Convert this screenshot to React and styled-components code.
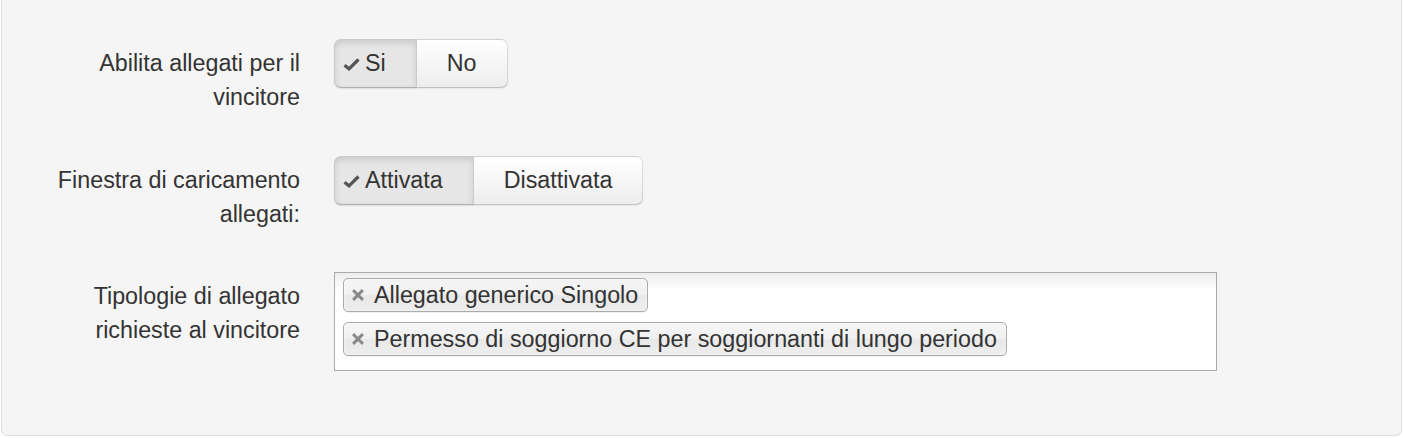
import React, { useState } from "react";
import styled, { createGlobalStyle } from "styled-components";

const GlobalStyle = createGlobalStyle`
  html, body {
    margin: 0;
    padding: 0;
    background: #ffffff;
  }
  body {
    font-family: "Liberation Sans", Arial, Helvetica, sans-serif;
    font-size: 23.3px;
    line-height: 34px;
    color: #333333;
  }
`

const Well = styled.div`
  margin: 0 1px 0 1px;
  height: 436px;
  box-sizing: border-box;
  background: #f5f5f5;
  border: 1px solid #e0e0e0;
  border-top: none;
  border-radius: 0 0 7px 7px;
  box-shadow: 0 1px 1px rgba(0, 0, 0, 0.04);
  padding: 39px 32px 0 31px;
  display: flex;
  flex-direction: column;
`

const Row = styled.div`
  display: flex;
  align-items: flex-start;
  margin-top: ${p => p.$gap || 0}px;
`

const Label = styled.label`
  width: 267px;
  flex-shrink: 0;
  text-align: right;
  padding-top: 7px;
  margin-right: 34px;
  color: #333333;
`

const Group = styled.div`
  display: inline-flex;
  border-radius: 7px;
  box-shadow: 0 1px 2px rgba(0, 0, 0, 0.06);
`

const ToggleButton = styled.button`
  font-family: inherit;
  font-size: 23.3px;
  line-height: 33px;
  color: #333333;
  height: 49px;
  padding: 0 30px;
  margin: 0;
  display: inline-flex;
  align-items: center;
  cursor: pointer;
  border: 1px solid rgba(0, 0, 0, 0.12);
  border-bottom-color: rgba(0, 0, 0, 0.24);
  background: ${p => p.$active
    ? "#e6e6e6"
    : "linear-gradient(to bottom, #ffffff, #ededed)"};
  box-shadow: ${p => p.$active
    ? "inset 0 3px 6px rgba(0, 0, 0, 0.12), 0 1px 2px rgba(0, 0, 0, 0.05)"
    : "inset 0 1px 0 rgba(255, 255, 255, 0.3)"};

  &:first-child {
    border-radius: 7px 0 0 7px;
  }
  &:last-child {
    border-radius: 0 7px 7px 0;
    border-left: none;
  }
`

const Check = styled.svg`
  width: 17px;
  height: 14px;
  margin-left: -22px;
  margin-right: 5px;
  flex-shrink: 0;
`

const CheckIcon = () => (
  <Check viewBox="0 0 17 14">
    <path d="M1.5 8.2 L6 11.8 L15.5 2.5" fill="none" stroke="#555555" strokeWidth="3.2" strokeLinejoin="miter" />
  </Check>
)

const Toggle = ({ options }) => {
  const [value, setValue] = useState(options[0]);
  return (
    <Group>
      {options.map(o => (
        <ToggleButton key={o} $active={value === o} onClick={() => setValue(o)}>
          {value === o && <CheckIcon />}
          {o}
        </ToggleButton>
      ))}
    </Group>
  )
}

const ChoiceBox = styled.ul`
  list-style: none;
  margin: 0;
  width: 883px;
  height: 99px;
  box-sizing: border-box;
  padding: 5px 8px 0 8px;
  border: 1px solid #aaaaaa;
  background: linear-gradient(to bottom, #eeeeee 1%, #ffffff 18%);
  display: flex;
  flex-wrap: wrap;
  align-content: flex-start;
  gap: 10px 8px;
`

const Choice = styled.li`
  display: flex;
  align-items: center;
  height: 34px;
  box-sizing: border-box;
  padding: 0 9px 0 8px;
  border: 1px solid #aaaaaa;
  border-radius: 5px;
  background: linear-gradient(to bottom, #f4f4f4 20%, #f0f0f0 50%, #e8e8e8 52%, #eeeeee 100%);
  box-shadow: inset 0 0 2px #ffffff, 0 1px 0 rgba(0, 0, 0, 0.05);
  color: #333333;
  font-size: 23.3px;
  line-height: 28px;
  white-space: nowrap;
`

const Remove = styled.svg`
  width: 12px;
  height: 12px;
  margin-right: 10px;
  flex-shrink: 0;
  cursor: pointer;
`

const RemoveIcon = ({ onClick }) => (
  <Remove viewBox="0 0 12 12" onClick={onClick}>
    <path d="M2.2 2.2 L9.8 9.8 M9.8 2.2 L2.2 9.8" stroke="#888888" strokeWidth="3" strokeLinecap="square" />
  </Remove>
)

const App = () => {
  const [tags, setTags] = useState([
    "Allegato generico Singolo",
    "Permesso di soggiorno CE per soggiornanti di lungo periodo",
  ]);

  return (
    <>
      <GlobalStyle />
      <Well>
        <Row>
          <Label>Abilita allegati per il vincitore</Label>
          <Toggle options={["Si", "No"]} />
        </Row>
        <Row $gap={42}>
          <Label>Finestra di caricamento allegati:</Label>
          <Toggle options={["Attivata", "Disattivata"]} />
        </Row>
        <Row $gap={41}>
          <Label>Tipologie di allegato richieste al vincitore</Label>
          <ChoiceBox>
            {tags.map(t => (
              <Choice key={t}>
                <RemoveIcon onClick={() => setTags(tags.filter(x => x !== t))} />
                {t}
              </Choice>
            ))}
          </ChoiceBox>
        </Row>
      </Well>
    </>
  )
}

export default App;
